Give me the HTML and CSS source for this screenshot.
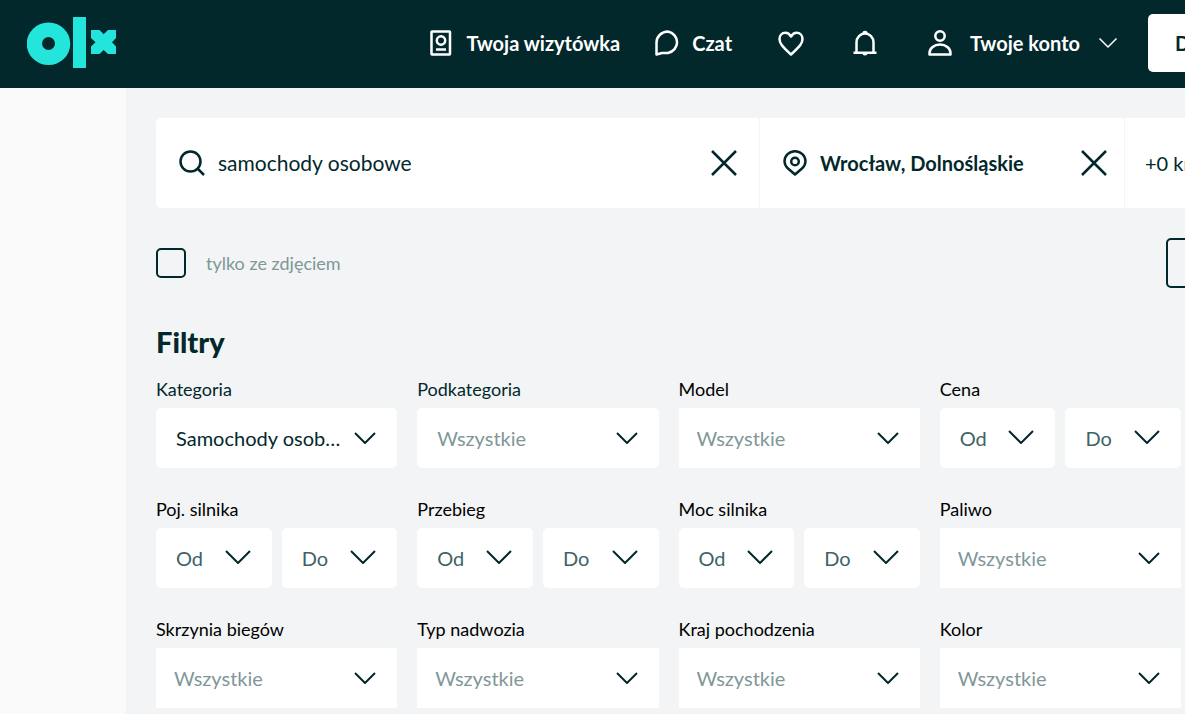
FILE: index.html
```html
<!DOCTYPE html>
<html lang="pl">
<head>
<meta charset="utf-8">
<meta name="viewport" content="width=device-width, initial-scale=1">
<title>OLX – Samochody osobowe, Wrocław</title>
<link rel="stylesheet" href="styles.css">
</head>
<body>
<svg class="sprite" aria-hidden="true">
  <symbol id="chevron" viewBox="0 0 24 14"><path d="M2 2l10 10L22 2"/></symbol>
  <symbol id="chevron-wide" viewBox="0 0 28 18"><path d="M2 2l12 12L26 2"/></symbol>
  <symbol id="cross" viewBox="0 0 28 28"><path d="M2 2l24 24M26 2L2 26"/></symbol>
</svg>

<header class="header">
  <a class="logo" href="#" aria-label="OLX">
    <svg width="90" height="52" viewBox="0 0 90 52">
      <path fill-rule="evenodd" d="M21.500 5.500a21.500 21 0 1 0 0 42.500a21.500 21 0 1 0 0-42.500zM21.500 20a6.500 6.500 0 1 1 0 13a6.500 6.500 0 1 1 0-13z"/>
      <path d="M46 0h13v51H46z"/>
      <path d="M64 13h8.500l4.200 4.200 4.300-4.200h8v8l-4 4.200 4 4.300V37h-8l-4.300-4-4.200 4H64v-7.500l4.500-4.300L64 21z"/>
    </svg>
  </a>
  <nav class="nav">
    <a class="nav-link" href="#">
      <svg width="22" height="26" viewBox="0 0 22 26"><rect x="1.500" y="1.500" width="18.500" height="23" rx=".5"/><circle cx="11" cy="10.500" r="4.200"/><path d="M6 19.500h10"/></svg>
      <span>Twoja wizytówka</span>
    </a>
    <a class="nav-link nav-chat" href="#">
      <svg width="26" height="26" viewBox="0 0 26 26"><path d="M1.500 24.500V12.500a11.500 11 0 0 1 11.500-11a11.500 11 0 0 1 0 21.500H7z M1.500 24.500L7 23"/></svg>
      <span>Czat</span>
    </a>
    <a class="nav-icon" href="#" aria-label="Obserwowane">
      <svg width="26" height="26" viewBox="0 0 26 26"><path d="M13 6.500C11.500 4 10 2.700 7.500 2.700C4 2.700 1.500 5.500 1.500 9C1.500 13 3.500 15.500 13 24.500C22.500 15.500 24.500 13 24.500 9C24.500 5.500 22 2.700 18.500 2.700C16 2.700 14.500 4 13 6.500z"/></svg>
    </a>
    <a class="nav-icon nav-bell" href="#" aria-label="Powiadomienia">
      <svg width="26" height="26" viewBox="0 0 26 26"><path d="M1.500 22.800h23M4.500 22.500V12.500a8.500 9 0 0 1 17 0v10"/><path class="solid" d="M10.300 3.500a2.700 2.700 0 0 1 5.400 0zM10.500 23h5a2.500 2.500 0 0 1-5 0z"/></svg>
    </a>
    <a class="nav-link nav-account" href="#">
      <svg width="24" height="26" viewBox="0 0 24 26"><circle cx="12" cy="6" r="4.700"/><path d="M1.500 24.500v-1.500a10.500 8.500 0 0 1 21 0v1.500z"/></svg>
      <span>Twoje konto</span>
      <svg class="nav-chevron" width="20" height="12" viewBox="0 0 20 12"><path d="M1.500 1.500l8.500 8.500 8.500-8.500"/></svg>
    </a>
  </nav>
  <button class="add-button" type="button">Dodaj ogłoszenie</button>
</header>

<main class="main">
  <form class="search">
    <div class="search-query">
      <svg width="28" height="28" viewBox="0 0 28 28"><circle cx="12.500" cy="12.500" r="10"/><path d="M19.500 19.500l6.500 6.500"/></svg>
      <input class="query-input" type="text" value="samochody osobowe" aria-label="Szukaj">
      <button class="clear" type="button" aria-label="Wyczyść wyszukiwanie"><svg width="28" height="28"><use href="#cross"/></svg></button>
    </div>
    <div class="search-location">
      <svg width="24" height="26" viewBox="0 0 24 26"><path d="M12 24.500L5 18.500A10.300 10.300 0 0 1 1.500 11.500a10.500 10.300 0 0 1 21 0A10.300 10.300 0 0 1 19 18.500z"/><circle cx="12" cy="11.500" r="3.800"/></svg>
      <input class="location-input" type="text" value="Wrocław, Dolnośląskie" aria-label="Lokalizacja">
      <button class="clear" type="button" aria-label="Wyczyść lokalizację"><svg width="28" height="28"><use href="#cross"/></svg></button>
    </div>
    <button class="search-radius" type="button">+0 km</button>
  </form>

  <div class="options">
    <label class="photo-only"><input class="checkbox" type="checkbox"><span>tylko ze zdjęciem</span></label>
    <button class="save-search" type="button" aria-label="Obserwuj wyszukiwanie"></button>
  </div>

  <h1 class="title">Filtry</h1>
  <div class="filters">
    <div class="filter">
      <label class="filter-label dark" for="kategoria">Kategoria</label>
      <div class="field rounded"><select class="select chosen" id="kategoria"><option>Samochody osobowe</option></select><svg class="arrow"><use href="#chevron"/></svg></div>
    </div>
    <div class="filter">
      <label class="filter-label dark" for="podkategoria">Podkategoria</label>
      <div class="field rounded"><select class="select inset" id="podkategoria"><option>Wszystkie</option></select><svg class="arrow"><use href="#chevron"/></svg></div>
    </div>
    <div class="filter">
      <label class="filter-label" for="model">Model</label>
      <div class="field"><select class="select" id="model"><option>Wszystkie</option></select><svg class="arrow"><use href="#chevron"/></svg></div>
    </div>
    <div class="filter" role="group" aria-labelledby="cena">
      <span class="filter-label" id="cena">Cena</span>
      <div class="range">
        <div class="bound"><input class="bound-input" type="text" placeholder="Od" aria-label="Cena od"><button class="bound-toggle" type="button" aria-label="Lista cen od"><svg width="28" height="18"><use href="#chevron-wide"/></svg></button></div>
        <div class="bound"><input class="bound-input" type="text" placeholder="Do" aria-label="Cena do"><button class="bound-toggle" type="button" aria-label="Lista cen do"><svg width="28" height="18"><use href="#chevron-wide"/></svg></button></div>
      </div>
    </div>
    <div class="filter" role="group" aria-labelledby="pojemnosc">
      <span class="filter-label" id="pojemnosc">Poj. silnika</span>
      <div class="range">
        <div class="bound"><input class="bound-input" type="text" placeholder="Od" aria-label="Pojemność od"><button class="bound-toggle" type="button" aria-label="Lista pojemności od"><svg width="28" height="18"><use href="#chevron-wide"/></svg></button></div>
        <div class="bound"><input class="bound-input" type="text" placeholder="Do" aria-label="Pojemność do"><button class="bound-toggle" type="button" aria-label="Lista pojemności do"><svg width="28" height="18"><use href="#chevron-wide"/></svg></button></div>
      </div>
    </div>
    <div class="filter" role="group" aria-labelledby="przebieg">
      <span class="filter-label" id="przebieg">Przebieg</span>
      <div class="range">
        <div class="bound"><input class="bound-input" type="text" placeholder="Od" aria-label="Przebieg od"><button class="bound-toggle" type="button" aria-label="Lista przebiegów od"><svg width="28" height="18"><use href="#chevron-wide"/></svg></button></div>
        <div class="bound"><input class="bound-input" type="text" placeholder="Do" aria-label="Przebieg do"><button class="bound-toggle" type="button" aria-label="Lista przebiegów do"><svg width="28" height="18"><use href="#chevron-wide"/></svg></button></div>
      </div>
    </div>
    <div class="filter" role="group" aria-labelledby="moc">
      <span class="filter-label" id="moc">Moc silnika</span>
      <div class="range">
        <div class="bound"><input class="bound-input" type="text" placeholder="Od" aria-label="Moc od"><button class="bound-toggle" type="button" aria-label="Lista mocy od"><svg width="28" height="18"><use href="#chevron-wide"/></svg></button></div>
        <div class="bound"><input class="bound-input" type="text" placeholder="Do" aria-label="Moc do"><button class="bound-toggle" type="button" aria-label="Lista mocy do"><svg width="28" height="18"><use href="#chevron-wide"/></svg></button></div>
      </div>
    </div>
    <div class="filter">
      <label class="filter-label" for="paliwo">Paliwo</label>
      <div class="field"><select class="select" id="paliwo"><option>Wszystkie</option></select><svg class="arrow"><use href="#chevron"/></svg></div>
    </div>
    <div class="filter">
      <label class="filter-label" for="skrzynia">Skrzynia biegów</label>
      <div class="field"><select class="select" id="skrzynia"><option>Wszystkie</option></select><svg class="arrow"><use href="#chevron"/></svg></div>
    </div>
    <div class="filter">
      <label class="filter-label" for="nadwozie">Typ nadwozia</label>
      <div class="field"><select class="select" id="nadwozie"><option>Wszystkie</option></select><svg class="arrow"><use href="#chevron"/></svg></div>
    </div>
    <div class="filter">
      <label class="filter-label" for="kraj">Kraj pochodzenia</label>
      <div class="field"><select class="select" id="kraj"><option>Wszystkie</option></select><svg class="arrow"><use href="#chevron"/></svg></div>
    </div>
    <div class="filter">
      <label class="filter-label" for="kolor">Kolor</label>
      <div class="field"><select class="select" id="kolor"><option>Wszystkie</option></select><svg class="arrow"><use href="#chevron"/></svg></div>
    </div>
  </div>
</main>
</body>
</html>
```
FILE: styles.css
```css
*, *::before, *::after { box-sizing: border-box; }

body {
  margin: 0;
  overflow-x: hidden;
  background: #fafafa;
  color: #02282c;
  font-family: Lato, "Open Sans", sans-serif;
  font-size: 20px;
  line-height: 24px;
}

button, input, select {
  margin: 0;
  padding: 0;
  border: 0;
  background: none;
  color: inherit;
  font: inherit;
}

svg {
  display: block;
  flex: none;
  fill: none;
  stroke: currentColor;
  stroke-width: 2.5;
  stroke-linejoin: round;
}

.sprite { position: absolute; width: 0; height: 0; }

/* Header */
.header {
  display: flex;
  align-items: center;
  height: 88px;
  padding: 0 0 2px 27px;
  overflow: hidden;
  background: #02282c;
  color: #fff;
}
.logo svg { fill: #23e5db; stroke: none; }
.nav {
  display: flex;
  align-items: center;
  margin-left: auto;
  margin-right: 30px;
  font-weight: 700;
  white-space: nowrap;
}
.nav a { color: inherit; text-decoration: none; }
.nav-link { display: flex; align-items: center; gap: 14px; }
.nav-chat { margin-left: 35px; gap: 11px; }
.nav-icon { margin-left: 46px; }
.nav-bell { margin-left: 48px; }
.nav-account { margin-left: 50px; gap: 18px; }
.nav-chevron { stroke-width: 1.5; }
.solid { fill: currentColor; stroke: none; }
.add-button {
  flex: none;
  width: 208px;
  height: 58px;
  margin-right: -171px;
  border-radius: 5px;
  background: #fff;
  color: #02282c;
  font-weight: 700;
  padding-left: 27px;
  text-align: left;
  white-space: nowrap;
}

/* Page body */
.main {
  min-height: calc(100vh - 88px);
  margin-left: 126px;
  padding: 30px 0 6px 30px;
  overflow: hidden;
  background: #f2f4f5;
}

.search {
  display: flex;
  height: 90px;
  border-radius: 5px 0 0 5px;
  background: #fff;
}
.search-query, .search-location {
  display: flex;
  align-items: center;
  min-width: 0;
  border-right: 1px solid #f2f4f5;
}
.search-query { flex: 604 1 604px; padding: 0 21px 0 22px; }
.search-location { flex: 365 1 365px; padding: 0 16px 0 23px; }
.search-radius { flex: 0 0 60px; min-width: 0; padding-left: 20px; text-align: left; white-space: nowrap; }
.query-input, .location-input { flex: 1; min-width: 0; outline: 0; }
.query-input { margin-left: 12px; font-size: 21px; }
.location-input { margin-left: 13px; font-weight: 700; }

.options {
  display: flex;
  align-items: center;
  justify-content: space-between;
  margin-top: 30px;
}
.photo-only {
  display: flex;
  align-items: center;
  gap: 20px;
  color: #7f9799;
  font-size: 18px;
}
.checkbox {
  width: 30px;
  height: 30px;
  border: 2px solid #02282c;
  border-radius: 5px;
  appearance: none;
}
.save-search {
  width: 220px;
  height: 50px;
  margin-right: -201px;
  border: 2px solid #02282c;
  border-radius: 5px;
}

/* Filters */
.title {
  margin: 36px 0 19px;
  font-size: 29px;
  line-height: 36px;
  font-weight: 900;
}
.filters {
  display: grid;
  grid-template-columns: repeat(4, minmax(0, 1fr));
  gap: 31px 20px;
  padding-right: 4px;
}
.filter-label {
  display: block;
  margin-bottom: 9px;
  color: #000;
  font-size: 18px;
  line-height: 20px;
}
.filter-label.dark { color: #02282c; }
.field { position: relative; height: 60px; background: #fff; }
.rounded { border-radius: 5px; }
.select {
  display: block;
  width: 100%;
  height: 100%;
  padding: 0 52px 0 18px;
  color: #7f9799;
  appearance: none;
  text-overflow: ellipsis;
}
.select.inset { padding-left: 20px; }
.select.chosen { padding-left: 20px; color: #02282c; }
.arrow {
  position: absolute;
  top: 23px;
  right: 20px;
  width: 24px;
  height: 14px;
  pointer-events: none;
  stroke-width: 2;
}
.range { display: grid; grid-template-columns: repeat(2, minmax(0, 1fr)); gap: 10px; }
.bound {
  display: flex;
  align-items: center;
  height: 60px;
  padding: 0 20px;
  border-radius: 5px;
  background: #fff;
}
.bound-input { flex: 1; min-width: 0; outline: 0; }
.bound-input::placeholder { color: #406367; opacity: 1; }
.bound-toggle svg { stroke-width: 2; }
```
